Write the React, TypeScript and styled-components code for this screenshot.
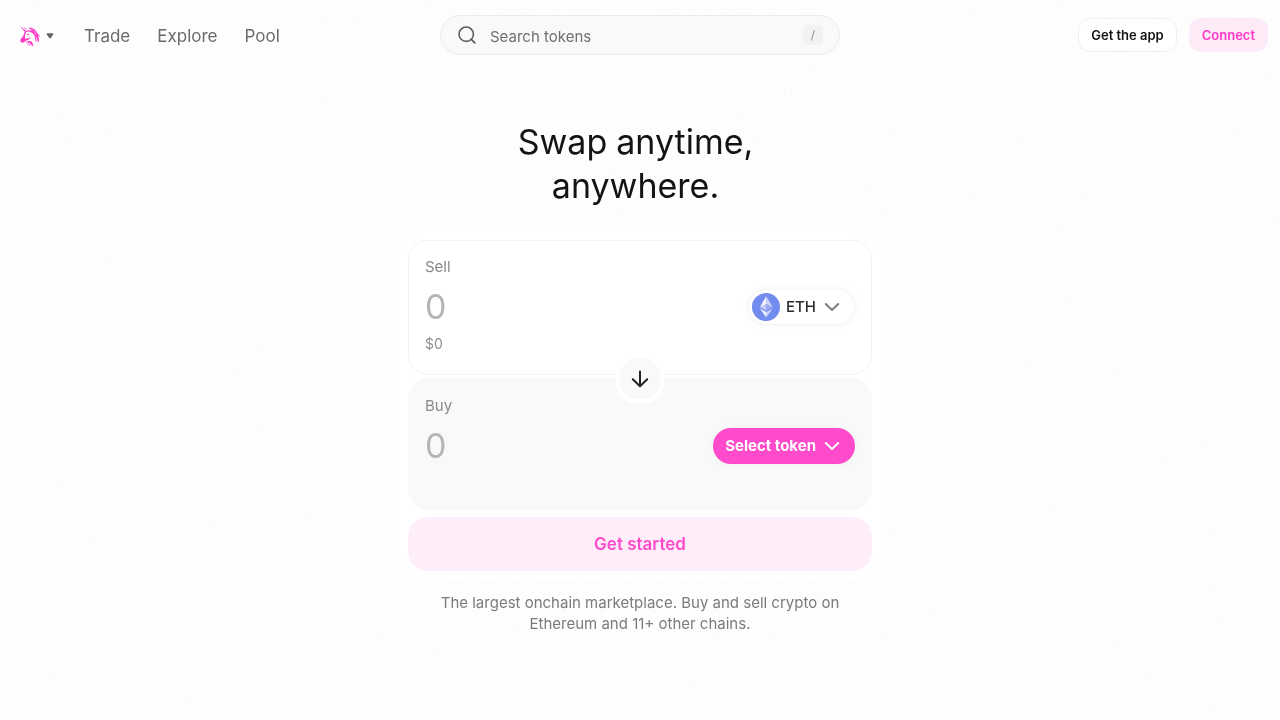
import React from 'react';
import styled, { createGlobalStyle } from 'styled-components';

const GlobalStyle = createGlobalStyle`
  * { box-sizing: border-box; }
  body {
    margin: 0;
    min-height: 100vh;
    background: #fefefe;
    color: #131313;
    font-family: Inter, "Liberation Sans", sans-serif;
  }
  button, input { font: inherit; }
  button { cursor: pointer; }
`;

const Grain = styled.svg`
  position: fixed;
  inset: 0;
  z-index: -1;
  width: 100%;
  height: 100%;
  pointer-events: none;
`;

const Nav = styled.nav`
  display: grid;
  grid-template-columns: 1fr minmax(0, 400px) 1fr;
  align-items: center;
  gap: 16px;
  padding: 15px 12px;
`;

const NavStart = styled.div`
  display: flex;
  align-items: center;
  padding: 2px 0 0 8px;
`;

const LogoButton = styled.button`
  display: flex;
  align-items: center;
  gap: 6px;
  padding: 0;
  margin-right: 30px;
  border: 0;
  background: none;
`;

const NavLinks = styled.div`
  display: flex;
  gap: 27px;
`;

const NavLink = styled.a`
  color: #6b6b6b;
  font-size: 17px;
  line-height: 24px;
  text-decoration: none;
`;

const SearchBox = styled.label`
  display: flex;
  align-items: center;
  gap: 13px;
  height: 40px;
  padding: 0 16px;
  border: 1px solid #ebebeb;
  border-radius: 20px;
  background: #f9f9f9;
`;

const SearchInput = styled.input`
  flex: 1;
  min-width: 0;
  height: 22px;
  padding: 2px 0 0;
  border: 0;
  outline: 0;
  background: none;
  font-size: 15px;
  line-height: 20px;
  &::placeholder { color: #6f6f6f; opacity: 1; }
`;

const Key = styled.kbd`
  display: grid;
  place-items: center;
  width: 20px;
  height: 20px;
  border-radius: 4px;
  background: #f2f2f2;
  color: #8f8f8f;
  font-family: inherit;
  font-size: 12px;
  line-height: 16px;
`;

const NavEnd = styled.div`
  display: flex;
  justify-content: flex-end;
  gap: 12px;
`;

const NavButton = styled.button<{ $accent?: boolean }>`
  height: 34px;
  padding: 0 12px;
  border: 1px solid ${(p) => (p.$accent ? 'transparent' : '#efefef')};
  border-radius: 12px;
  background: ${(p) => (p.$accent ? '#feebf8' : '#ffffff')};
  color: ${(p) => (p.$accent ? '#ff37c7' : '#131313')};
  font-size: 13px;
  font-weight: 600;
  line-height: 16px;
`;

const Main = styled.main`
  display: flex;
  flex-direction: column;
  align-items: center;
  padding: 50px 16px 40px;
`;

const Title = styled.h1`
  max-width: 280px;
  margin: 0;
  font-size: 34px;
  font-weight: 400;
  line-height: 44px;
  text-align: center;
`;

const Word = styled.span`
  display: inline-block;
  margin-right: 9px;
`;

const SwapCard = styled.form`
  width: 100%;
  max-width: 480px;
  margin-top: 24px;
  padding: 8px;
  border-radius: 28px;
  background: #ffffff;
`;

const Panel = styled.section<{ $filled?: boolean }>`
  height: ${(p) => (p.$filled ? 132 : 135)}px;
  padding: ${(p) => (p.$filled ? '17px 16px' : '16px')};
  border: 1px solid ${(p) => (p.$filled ? '#f9f9f9' : '#f3f3f3')};
  border-radius: 20px;
  background: ${(p) => (p.$filled ? '#f9f9f9' : '#ffffff')};
`;

const PanelLabel = styled.label`
  display: block;
  color: #8a8a8a;
  font-size: 15px;
  line-height: 20px;
`;

const AmountRow = styled.div`
  display: flex;
  align-items: center;
  margin-top: 12px;
`;

const AmountInput = styled.input`
  flex: 1;
  min-width: 0;
  height: 36px;
  padding: 0;
  border: 0;
  outline: 0;
  background: none;
  font-size: 34px;
  line-height: 36px;
  &::placeholder { color: #b5b5b5; opacity: 1; }
`;

const FiatValue = styled.div`
  margin-top: 9px;
  color: #8f8f8f;
  font-size: 14px;
  line-height: 20px;
`;

const TokenButton = styled.button<{ $accent?: boolean }>`
  display: flex;
  align-items: center;
  gap: 6px;
  height: 36px;
  padding: ${(p) => (p.$accent ? '0 13px 0 12px' : '0 12px 0 3px')};
  border: ${(p) => (p.$accent ? '0' : '1px solid #f5f5f5')};
  border-radius: 18px;
  background: ${(p) => (p.$accent ? '#ff4bcb' : '#ffffff')};
  color: ${(p) => (p.$accent ? '#ffffff' : '#2b2b2b')};
  box-shadow: 0 0 8px rgba(0, 0, 0, 0.04);
  font-size: 15px;
  font-weight: ${(p) => (p.$accent ? 700 : 500)};
  line-height: 20px;
`;

const FlipButton = styled.button`
  position: relative;
  display: grid;
  place-items: center;
  width: 48px;
  height: 48px;
  margin: -20px auto -25px;
  padding: 0;
  border: 4px solid #ffffff;
  border-radius: 20px;
  background: #f9f9f9;
`;

const StartButton = styled.button`
  display: block;
  width: 100%;
  height: 54px;
  margin-top: 7px;
  border: 0;
  border-radius: 20px;
  background: #ffeefa;
  color: #ff4bcb;
  font-size: 17px;
  font-weight: 600;
  line-height: 24px;
`;

const Blurb = styled.p`
  max-width: 430px;
  margin: 13px 0 0;
  color: #7b7b7b;
  font-size: 15px;
  line-height: 21px;
  text-align: center;
`;

const UnicornLogo = () => (
  <svg width="20" height="21" viewBox="0 0 20 21" fill="none" aria-hidden="true">
    <path d="M0.2 0.6 C2.4 1.8 4.7 3.6 6.6 5.6 L5.6 6.4 C4 4.6 1.8 2.6 0.2 0.6Z" fill="#ff37c7" />
    <path d="M4 1.6 C6 2.6 7.2 4 7.8 5.4" stroke="#ff37c7" strokeWidth="0.7" />
    <path
      d="M6.4 5.4 C9 4.4 12.6 5.4 14.4 8.2 C16.2 10.8 15.4 13 16.3 15.4"
      stroke="#ff37c7"
      strokeWidth="1.1"
    />
    <path
      d="M5.2 5.6 C3.8 7.4 4 9 3 10.4 C1.9 12 0.4 12.7 0.3 14.2 C0.2 15.9 1.8 17 3.4 16.6 C4.6 16.2 4.7 15.2 5.8 14.8 C8 14.2 10 13.4 10.5 11 C9 12.2 7.4 12.4 5.8 12.7 C4.6 12.8 4.9 11 5.1 9.8 C5.3 8.2 5.6 7 6.8 5.6Z"
      fill="#ff37c7"
    />
    <path d="M6.6 8.4 C7.4 7.5 8.6 7.7 9.1 8.6 C8.3 9.4 7.2 9.2 6.6 8.4Z" fill="#ff37c7" />
    <path
      d="M8.2 2 C11.2 1 14.6 2.6 16 5.2 C17.2 7.6 19.4 8.2 19.8 11.2 C18.8 10.2 18 10 17.3 9.8 C19.4 11.8 19.6 14.4 18 17 C17.8 13.6 16.6 11.4 14.8 9 C13.1 6.6 10.9 5.6 9.2 5 C10.2 4.5 11 4.4 11.8 4.5 C10.9 3.2 9.6 2.4 8.2 2Z"
      fill="#ff37c7"
    />
    <path d="M12.2 3.4 C14 5.2 15.4 7 16.6 9" stroke="#ffffff" strokeWidth="0.5" />
    <path
      d="M5.4 17 C7 14.5 10.7 14.2 12.2 16.4 C13 17.8 12.8 19 13.7 20.6 C11.3 20 11 18.1 9.9 17.1 C8.8 16.2 7 16.2 5.4 17Z"
      fill="#ff37c7"
    />
    <path d="M7.5 18.8 C8.5 17.4 9.6 18 9.9 19.8" stroke="#ff37c7" strokeWidth="0.9" />
  </svg>
);

const EthIcon = () => (
  <svg width="28" height="28" viewBox="0 0 28 28" aria-hidden="true">
    <circle cx="14" cy="14" r="14" fill="#728bee" />
    <path d="M14.2 3.2 L7.8 14.1 L14.2 11.3Z" fill="#eef1fe" />
    <path d="M14.2 3.2 L20.7 14.1 L14.2 11.3Z" fill="#ccd5fa" />
    <path d="M7.8 14.1 L14.2 11.3 V17.8Z" fill="#c3cdf8" />
    <path d="M20.7 14.1 L14.2 11.3 V17.8Z" fill="#9aabf1" />
    <path d="M7.8 15.4 L14.2 19.1 V24.4Z" fill="#f2f4fe" />
    <path d="M20.7 15.4 L14.2 19.1 V24.4Z" fill="#ccd5fa" />
  </svg>
);

const Chevron = ({ color }: { color: string }) => (
  <svg width="20" height="20" viewBox="0 0 20 20" fill="none" aria-hidden="true">
    <path d="M3.8 7 L10 13 L16.2 7" stroke={color} strokeWidth="2" strokeLinecap="round" strokeLinejoin="round" />
  </svg>
);

export default function App() {
  return (
    <>
      <GlobalStyle />
      <Grain aria-hidden="true">
        <filter id="grain">
          <feTurbulence type="fractalNoise" baseFrequency="0.3" numOctaves="3" />
          <feColorMatrix values="0 0 0 0 0.5  0 0 0 0 0.5  0 0 0 0 0.5  0.08 0 0 0 -0.03" />
        </filter>
        <rect width="100%" height="100%" filter="url(#grain)" />
      </Grain>
      <Nav>
        <NavStart>
          <LogoButton type="button" aria-label="Uniswap menu">
            <UnicornLogo />
            <svg width="8" height="6" viewBox="0 0 8 6" aria-hidden="true">
              <path d="M1.4 0.2 H6.6 C7.4 0.2 7.6 1 7.2 1.6 L4.8 5 C4.4 5.6 3.6 5.6 3.2 5 L0.8 1.6 C0.4 1 0.6 0.2 1.4 0.2Z" fill="#636363" />
            </svg>
          </LogoButton>
          <NavLinks>
            <NavLink href="#trade">Trade</NavLink>
            <NavLink href="#explore">Explore</NavLink>
            <NavLink href="#pool">Pool</NavLink>
          </NavLinks>
        </NavStart>
        <SearchBox>
          <svg width="20" height="20" viewBox="0 0 20 20" fill="none" aria-hidden="true">
            <circle cx="9.2" cy="9.2" r="7.2" stroke="#5c5c5c" strokeWidth="1.6" />
            <path d="M14.4 14.4 L17.8 17.8" stroke="#5c5c5c" strokeWidth="1.8" strokeLinecap="round" />
          </svg>
          <SearchInput type="text" placeholder="Search tokens" aria-label="Search tokens" />
          <Key>/</Key>
        </SearchBox>
        <NavEnd>
          <NavButton type="button">Get the app</NavButton>
          <NavButton type="button" $accent>Connect</NavButton>
        </NavEnd>
      </Nav>
      <Main>
        <Title>
          <Word>Swap</Word>
          <Word>anytime,</Word>
          <Word>anywhere.</Word>
        </Title>
        <SwapCard>
          <Panel>
            <PanelLabel htmlFor="sell">Sell</PanelLabel>
            <AmountRow>
              <AmountInput id="sell" type="text" inputMode="decimal" placeholder="0" />
              <TokenButton type="button">
                <EthIcon />
                ETH
                <Chevron color="#7d7d7d" />
              </TokenButton>
            </AmountRow>
            <FiatValue>$0</FiatValue>
          </Panel>
          <FlipButton type="button" aria-label="Switch tokens">
            <svg width="24" height="24" viewBox="0 0 24 24" fill="none" aria-hidden="true">
              <path d="M12 4.5 V19 M4.8 12.3 L12 19.3 L19.2 12.3" stroke="#222222" strokeWidth="2" strokeLinecap="round" strokeLinejoin="round" />
            </svg>
          </FlipButton>
          <Panel $filled>
            <PanelLabel htmlFor="buy">Buy</PanelLabel>
            <AmountRow>
              <AmountInput id="buy" type="text" inputMode="decimal" placeholder="0" />
              <TokenButton type="button" $accent>
                Select token
                <Chevron color="#ffffff" />
              </TokenButton>
            </AmountRow>
          </Panel>
          <StartButton type="button">Get started</StartButton>
        </SwapCard>
        <Blurb>The largest onchain marketplace. Buy and sell crypto on Ethereum and 11+ other chains.</Blurb>
      </Main>
    </>
  );
}
